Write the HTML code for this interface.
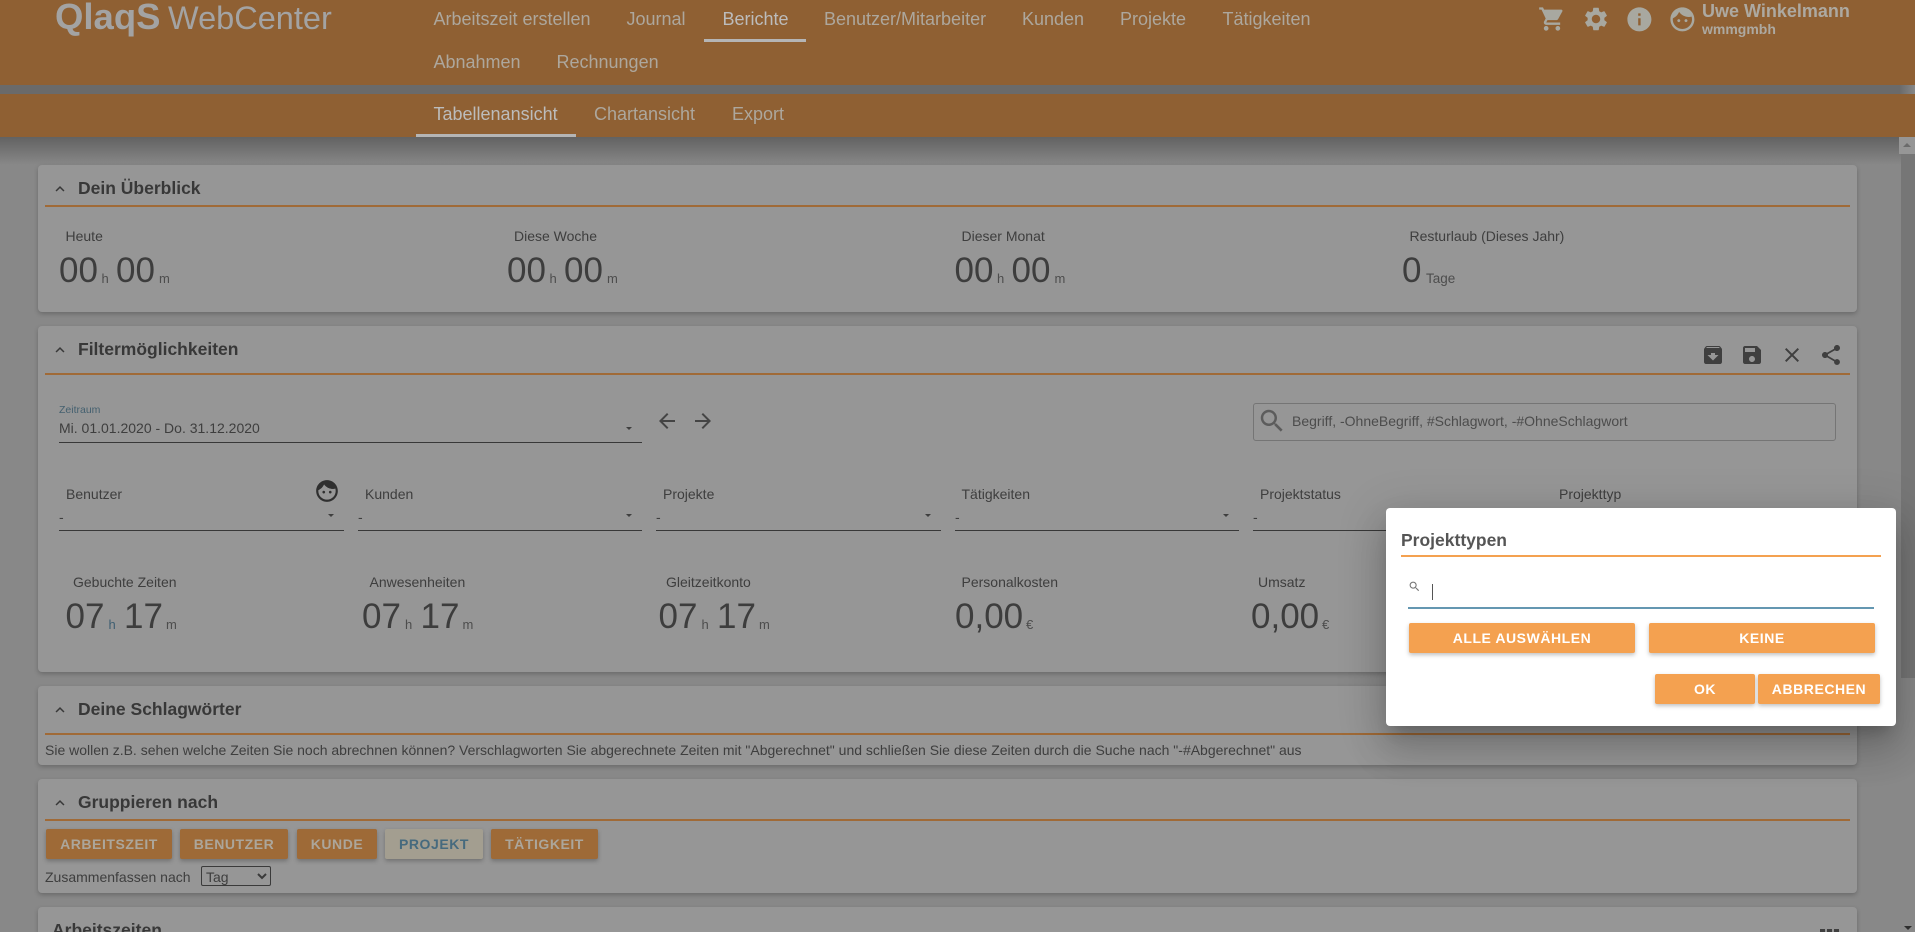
<!DOCTYPE html>
<html lang="de"><head><meta charset="utf-8"><title>QlaqS WebCenter</title>
<style>
*{box-sizing:border-box}
html,body{margin:0;padding:0;width:1915px;height:932px;overflow:hidden;background:#888;font-family:"Liberation Sans",Arial,sans-serif}
#w{position:relative;width:1915px;height:932px;overflow:hidden}
.a{position:absolute}
.t{position:absolute;white-space:nowrap;line-height:20px;font-size:14px;color:#3e3e3e}
.nav{font-size:18px;color:#ada79d}
.card{position:absolute;left:38px;width:1819px;background:#969696;border-radius:4px;box-shadow:0 2px 5px rgba(0,0,0,.22)}
.div{position:absolute;left:45px;width:1805px;height:2px;background:#a06a37}
.h{font-size:17.5px;font-weight:bold;color:#383838;left:78px}
.big{position:absolute;white-space:nowrap;font-size:35px;line-height:40px;color:#3d3d3d}
.sm{font-size:13px;color:#4d4d4d}
.ul{position:absolute;height:1px;background:#383838}
.tri{position:absolute;width:0;height:0;border-left:3px solid transparent;border-right:3px solid transparent;border-top:3px solid #3f3f3f}
.btn{position:absolute;height:30px;line-height:30px;text-align:center;font-size:14px;font-weight:bold;letter-spacing:.55px;border-radius:2px;background:#9e6a37;color:#aca69b;box-shadow:0 2px 4px rgba(0,0,0,.25);white-space:nowrap}
.mb{background:#f4a150;color:#fff;box-shadow:0 2px 4px rgba(0,0,0,.25)}
svg{position:absolute;display:block}
</style></head><body><div id="w">

<!-- page header shadow strip -->
<div class="a" style="left:0;top:85px;width:1915px;height:9px;background:linear-gradient(90deg,#6a6a6a 99.2%,#888 100%)"></div>
<div class="a" style="left:0;top:137px;width:1915px;height:28px;background:linear-gradient(#626262,#888)"></div>

<!-- cards -->
<div class="card" style="top:165px;height:147px"></div>
<div class="card" style="top:326px;height:346px"></div>
<div class="card" style="top:686px;height:79px"></div>
<div class="card" style="top:779px;height:114px"></div>
<div class="card" style="top:907px;height:25px;border-radius:4px 4px 0 0"></div>

<!-- header -->
<div class="a" style="left:0;top:0;width:1915px;height:85px;background:#8f6033"></div>
<div class="a" style="left:0;top:94px;width:1915px;height:43px;background:#8f6033"></div>

<div class="a" style="left:55px;top:-3px;font-size:36.5px;line-height:40px;font-weight:bold;color:#a3a3a3;white-space:nowrap">QlaqS</div>
<div class="a" style="left:168px;top:-2px;font-size:32.5px;line-height:40px;color:#a3a3a3;white-space:nowrap">WebCenter</div>

<div class="t nav" style="left:433.5px;top:9px">Arbeitszeit erstellen</div>
<div class="t nav" style="left:626.5px;top:9px">Journal</div>
<div class="t nav" style="left:722.5px;top:9px;color:#bcbcbc">Berichte</div>
<div class="a" style="left:704px;top:39px;width:102px;height:3px;background:#b5b5b5"></div>
<div class="t nav" style="left:824px;top:9px">Benutzer/Mitarbeiter</div>
<div class="t nav" style="left:1022px;top:9px">Kunden</div>
<div class="t nav" style="left:1120px;top:9px">Projekte</div>
<div class="t nav" style="left:1222.5px;top:9px">Tätigkeiten</div>
<div class="t nav" style="left:433.5px;top:52px">Abnahmen</div>
<div class="t nav" style="left:556.5px;top:52px">Rechnungen</div>

<div class="t nav" style="left:433.5px;top:104px;color:#bcbcbc">Tabellenansicht</div>
<div class="a" style="left:416px;top:134px;width:160px;height:3px;background:#b5b5b5"></div>
<div class="t nav" style="left:594px;top:104px">Chartansicht</div>
<div class="t nav" style="left:732px;top:104px">Export</div>

<svg style="left:1538px;top:5px" width="28" height="28" viewBox="0 0 24 24" fill="#a8a8a0"><path d="M7 18c-1.1 0-1.99.9-1.99 2S5.9 22 7 22s2-.9 2-2-.9-2-2-2zM1 2v2h2l3.6 7.59-1.35 2.45c-.16.28-.25.61-.25.96 0 1.1.9 2 2 2h12v-2H7.42c-.14 0-.25-.11-.25-.25l.03-.12.9-1.63h7.45c.75 0 1.41-.41 1.75-1.03l3.58-6.49c.08-.14.12-.31.12-.48 0-.55-.45-1-1-1H5.21l-.94-2H1zm16 16c-1.1 0-1.99.9-1.99 2s.89 2 1.99 2 2-.9 2-2-.9-2-2-2z"/></svg>
<svg style="left:1582px;top:5px" width="28" height="28" viewBox="0 0 24 24" fill="#a8a8a0"><path d="M19.14 12.94c.04-.3.06-.61.06-.94 0-.32-.02-.64-.07-.94l2.03-1.58c.18-.14.23-.41.12-.61l-1.92-3.32c-.12-.22-.37-.29-.59-.22l-2.39.96c-.5-.38-1.03-.7-1.62-.94l-.36-2.54c-.04-.24-.24-.41-.48-.41h-3.84c-.24 0-.43.17-.47.41l-.36 2.54c-.59.24-1.13.57-1.62.94l-2.39-.96c-.22-.08-.47 0-.59.22L2.74 8.87c-.12.21-.08.47.12.61l2.03 1.58c-.05.3-.09.63-.09.94s.02.64.07.94l-2.03 1.58c-.18.14-.23.41-.12.61l1.92 3.32c.12.22.37.29.59.22l2.39-.96c.5.38 1.03.7 1.62.94l.36 2.54c.05.24.24.41.48.41h3.84c.24 0 .44-.17.47-.41l.36-2.54c.59-.24 1.13-.56 1.62-.94l2.39.96c.22.08.47 0 .59-.22l1.92-3.32c.12-.22.07-.47-.12-.61l-2.01-1.58zM12 15.6c-1.98 0-3.6-1.62-3.6-3.6s1.62-3.6 3.6-3.6 3.6 1.62 3.6 3.6-1.62 3.6-3.6 3.6z"/></svg>
<svg style="left:1625px;top:5px" width="28.8" height="28.8" viewBox="0 0 24 24" fill="#a8a8a0"><path d="M12 2C6.48 2 2 6.48 2 12s4.48 10 10 10 10-4.48 10-10S17.52 2 12 2zm1 15h-2v-6h2v6zm0-8h-2V7h2v2z"/></svg>
<svg style="left:1668px;top:5px" width="28.8" height="28.8" viewBox="0 0 24 24" fill="#a8a8a0"><path d="M9 11.75c-.69 0-1.25.56-1.25 1.25s.56 1.25 1.25 1.25 1.25-.56 1.25-1.25-.56-1.25-1.25-1.25zm6 0c-.69 0-1.25.56-1.25 1.25s.56 1.25 1.25 1.25 1.25-.56 1.25-1.25-.56-1.25-1.25-1.25zM12 2C6.48 2 2 6.48 2 12s4.48 10 10 10 10-4.48 10-10S17.52 2 12 2zm0 18c-4.41 0-8-3.59-8-8 0-.29.02-.58.05-.86 2.36-1.05 4.23-2.98 5.21-5.37C11.07 8.33 14.05 10 17.42 10c.78 0 1.53-.09 2.25-.26.21.71.33 1.47.33 2.26 0 4.41-3.59 8-8 8z"/></svg>
<div class="t" style="left:1702px;top:1px;font-size:18px;font-weight:bold;color:#ada9a1">Uwe Winkelmann</div>
<div class="t" style="left:1702px;top:19px;font-size:14px;font-weight:bold;color:#ada9a1">wmmgmbh</div>

<!-- Scrollbar -->
<div class="a" style="left:1899px;top:137px;width:16px;height:17px;background:#969696"></div>
<div class="a" style="left:1903px;top:143px;width:0;height:0;border-left:4px solid transparent;border-right:4px solid transparent;border-bottom:4px solid #6b6b6b"></div>
<div class="a" style="left:1901px;top:154px;width:14px;height:524px;background:#767676"></div>
<div class="a" style="left:1904px;top:926px;width:0;height:0;border-left:4px solid transparent;border-right:4px solid transparent;border-top:4px solid #2e2e2e"></div>

<!-- Card 1 -->
<svg style="left:51px;top:180px" width="18" height="18" viewBox="0 0 24 24" fill="#383838"><path d="M12 8l-6 6 1.41 1.41L12 10.83l4.59 4.58L18 14z"/></svg>
<div class="t h" style="top:178px">Dein Überblick</div>
<div class="div" style="top:205px"></div>

<div class="t" style="left:65.5px;top:226px">Heute</div>
<div class="big" style="left:59px;top:251px">00</div><div class="t sm" style="left:101.5px;top:269px">h</div>
<div class="big" style="left:116px;top:251px">00</div><div class="t sm" style="left:159px;top:269px">m</div>

<div class="t" style="left:514px;top:226px">Diese Woche</div>
<div class="big" style="left:507px;top:251px">00</div><div class="t sm" style="left:549.5px;top:269px">h</div>
<div class="big" style="left:564px;top:251px">00</div><div class="t sm" style="left:607px;top:269px">m</div>

<div class="t" style="left:961.5px;top:226px">Dieser Monat</div>
<div class="big" style="left:954.5px;top:251px">00</div><div class="t sm" style="left:997px;top:269px">h</div>
<div class="big" style="left:1011.5px;top:251px">00</div><div class="t sm" style="left:1054.5px;top:269px">m</div>

<div class="t" style="left:1409.5px;top:226px">Resturlaub (Dieses Jahr)</div>
<div class="big" style="left:1402px;top:251px">0</div><div class="t sm" style="left:1426px;top:269px;font-size:13.5px">Tage</div>

<!-- Card 2 -->
<svg style="left:51px;top:341px" width="18" height="18" viewBox="0 0 24 24" fill="#383838"><path d="M12 8l-6 6 1.41 1.41L12 10.83l4.59 4.58L18 14z"/></svg>
<div class="t h" style="top:339px">Filtermöglichkeiten</div>
<div class="div" style="top:373px"></div>

<svg style="left:1701px;top:343px" width="24" height="24" viewBox="0 0 24 24" fill="#3f3f3f"><path d="M20.54 5.23l-1.39-1.68C18.88 3.21 18.47 3 18 3H6c-.47 0-.88.21-1.16.55L3.46 5.23C3.17 5.57 3 6.02 3 6.5V19c0 1.1.9 2 2 2h14c1.1 0 2-.9 2-2V6.5c0-.48-.17-.93-.46-1.27zM12 17.5L6.5 12H10v-2h4v2h3.5L12 17.5zM5.12 5l.81-1h12l.94 1H5.12z"/></svg>
<svg style="left:1740px;top:343px" width="24" height="24" viewBox="0 0 24 24" fill="#3f3f3f"><path d="M17 3H5c-1.11 0-2 .9-2 2v14c0 1.1.89 2 2 2h14c1.1 0 2-.9 2-2V7l-4-4zm-5 16c-1.66 0-3-1.34-3-3s1.34-3 3-3 3 1.34 3 3-1.34 3-3 3zm3-10H5V5h10v4z"/></svg>
<svg style="left:1779.5px;top:343px" width="24" height="24" viewBox="0 0 24 24" fill="#3f3f3f"><path d="M19 6.41L17.59 5 12 10.59 6.41 5 5 6.41 10.59 12 5 17.59 6.41 19 12 13.41 17.59 19 19 17.59 13.41 12z"/></svg>
<svg style="left:1819px;top:343px" width="24" height="24" viewBox="0 0 24 24" fill="#3f3f3f"><path d="M18 16.08c-.76 0-1.44.3-1.96.77L8.91 12.7c.05-.23.09-.46.09-.7s-.04-.47-.09-.7l7.05-4.11c.54.5 1.25.81 2.04.81 1.66 0 3-1.34 3-3s-1.34-3-3-3-3 1.34-3 3c0 .24.04.47.09.7L8.04 9.81C7.5 9.31 6.79 9 6 9c-1.66 0-3 1.34-3 3s1.34 3 3 3c.79 0 1.5-.31 2.04-.81l7.12 4.16c-.05.21-.08.43-.08.65 0 1.61 1.31 2.92 2.92 2.92 1.61 0 2.92-1.31 2.92-2.92s-1.31-2.92-2.92-2.92z"/></svg>

<div class="t" style="left:59px;top:400px;font-size:10.5px;color:#44606f">Zeitraum</div>
<div class="t" style="left:59px;top:418px">Mi. 01.01.2020 - Do. 31.12.2020</div>
<div class="ul" style="left:59px;top:442px;width:583px"></div>
<div class="tri" style="left:626px;top:427px"></div>
<svg style="left:655px;top:409px" width="24" height="24" viewBox="0 0 24 24" fill="#444"><path d="M20 11H7.83l5.59-5.59L12 4l-8 8 8 8 1.41-1.41L7.83 13H20v-2z"/></svg>
<svg style="left:691px;top:409px" width="24" height="24" viewBox="0 0 24 24" fill="#444"><path d="M12 4l-1.41 1.41L16.17 11H4v2h12.17l-5.58 5.59L12 20l8-8z"/></svg>

<div class="a" style="left:1253px;top:403px;width:583px;height:38px;border:1px solid #757575;border-radius:3px"></div>
<svg style="left:1257px;top:406px" width="30" height="30" viewBox="0 0 24 24" fill="#5c5c5c"><path d="M15.5 14h-.79l-.28-.27C15.41 12.59 16 11.11 16 9.5 16 5.91 13.09 3 9.5 3S3 5.91 3 9.5 5.91 16 9.5 16c1.61 0 3.09-.59 4.23-1.57l.27.28v.79l5 4.99L20.49 19l-4.99-5zm-6 0C7.01 14 5 11.99 5 9.5S7.01 5 9.5 5 14 7.01 14 9.5 11.99 14 9.5 14z"/></svg>
<div class="t" style="left:1292px;top:411px;color:#4c4c4c">Begriff, -OhneBegriff, #Schlagwort, -#OhneSchlagwort</div>

<div class="t" style="left:66px;top:484px">Benutzer</div>
<div class="t" style="left:365px;top:484px">Kunden</div>
<div class="t" style="left:663px;top:484px">Projekte</div>
<div class="t" style="left:961.5px;top:484px">Tätigkeiten</div>
<div class="t" style="left:1260px;top:484px">Projektstatus</div>
<div class="t" style="left:1559px;top:484px">Projekttyp</div>

<svg style="left:314px;top:478px" width="26" height="26" viewBox="0 0 24 24" fill="#2f2f2f"><path d="M4.05 11.14C6.41 10.09 8.28 8.16 9.26 5.77 11.07 8.33 14.05 10 17.42 10c.78 0 1.53-.09 2.25-.26C18.8 6 15.5 3 12 3 7.5 3 4.3 7 4.05 11.14z"/><path d="M9 11.75c-.69 0-1.25.56-1.25 1.25s.56 1.25 1.25 1.25 1.25-.56 1.25-1.25-.56-1.25-1.25-1.25zm6 0c-.69 0-1.25.56-1.25 1.25s.56 1.25 1.25 1.25 1.25-.56 1.25-1.25-.56-1.25-1.25-1.25zM12 2C6.48 2 2 6.48 2 12s4.48 10 10 10 10-4.48 10-10S17.52 2 12 2zm0 18c-4.41 0-8-3.59-8-8 0-.29.02-.58.05-.86 2.36-1.05 4.23-2.98 5.21-5.37C11.07 8.33 14.05 10 17.42 10c.78 0 1.53-.09 2.25-.26.21.71.33 1.47.33 2.26 0 4.41-3.59 8-8 8z"/></svg>

<div class="t" style="left:59px;top:507px">-</div>
<div class="t" style="left:358px;top:507px">-</div>
<div class="t" style="left:656px;top:507px">-</div>
<div class="t" style="left:955px;top:507px">-</div>
<div class="t" style="left:1253px;top:507px">-</div>
<div class="tri" style="left:328px;top:514px"></div>
<div class="tri" style="left:626px;top:514px"></div>
<div class="tri" style="left:925px;top:514px"></div>
<div class="tri" style="left:1223px;top:514px"></div>
<div class="ul" style="left:59px;top:530px;width:285px"></div>
<div class="ul" style="left:358px;top:530px;width:284px"></div>
<div class="ul" style="left:656px;top:530px;width:285px"></div>
<div class="ul" style="left:955px;top:530px;width:284px"></div>
<div class="ul" style="left:1253px;top:530px;width:150px"></div>

<div class="t" style="left:73px;top:572px">Gebuchte Zeiten</div>
<div class="big" style="left:65.5px;top:597px">07</div><div class="t sm" style="left:108.5px;top:615px;color:#3f5f72">h</div>
<div class="big" style="left:124px;top:597px">17</div><div class="t sm" style="left:166px;top:615px">m</div>

<div class="t" style="left:369.5px;top:572px">Anwesenheiten</div>
<div class="big" style="left:362px;top:597px">07</div><div class="t sm" style="left:405px;top:615px">h</div>
<div class="big" style="left:420.5px;top:597px">17</div><div class="t sm" style="left:462.5px;top:615px">m</div>

<div class="t" style="left:666px;top:572px">Gleitzeitkonto</div>
<div class="big" style="left:658.5px;top:597px">07</div><div class="t sm" style="left:701.5px;top:615px">h</div>
<div class="big" style="left:717px;top:597px">17</div><div class="t sm" style="left:759px;top:615px">m</div>

<div class="t" style="left:961.5px;top:572px">Personalkosten</div>
<div class="big" style="left:955px;top:597px">0,00</div><div class="t sm" style="left:1026px;top:615px">€</div>

<div class="t" style="left:1258px;top:572px">Umsatz</div>
<div class="big" style="left:1251px;top:597px">0,00</div><div class="t sm" style="left:1322px;top:615px">€</div>

<!-- Card 3 -->
<svg style="left:51px;top:701px" width="18" height="18" viewBox="0 0 24 24" fill="#383838"><path d="M12 8l-6 6 1.41 1.41L12 10.83l4.59 4.58L18 14z"/></svg>
<div class="t h" style="top:699px">Deine Schlagwörter</div>
<div class="div" style="top:733px"></div>
<div class="t" style="left:45px;top:740px">Sie wollen z.B. sehen welche Zeiten Sie noch abrechnen können? Verschlagworten Sie abgerechnete Zeiten mit "Abgerechnet" und schließen Sie diese Zeiten durch die Suche nach "-#Abgerechnet" aus</div>

<!-- Card 4 -->
<svg style="left:51px;top:794px" width="18" height="18" viewBox="0 0 24 24" fill="#383838"><path d="M12 8l-6 6 1.41 1.41L12 10.83l4.59 4.58L18 14z"/></svg>
<div class="t h" style="top:792px">Gruppieren nach</div>
<div class="div" style="top:819px"></div>
<div class="btn" style="left:46px;top:829px;width:126px">ARBEITSZEIT</div>
<div class="btn" style="left:180px;top:829px;width:108px">BENUTZER</div>
<div class="btn" style="left:297px;top:829px;width:80px">KUNDE</div>
<div class="btn" style="left:385px;top:829px;width:98px;background:#a39e90;color:#466a7e">PROJEKT</div>
<div class="btn" style="left:491px;top:829px;width:107px">TÄTIGKEIT</div>
<div class="t" style="left:45px;top:867px">Zusammenfassen nach</div>
<div class="a" style="left:201px;top:866px;width:70px;height:20px;border:1px solid #3a3a3a;border-radius:2px"></div>
<div class="t" style="left:206px;top:867px">Tag</div>
<svg style="left:257px;top:873px" width="10" height="7" viewBox="0 0 10 7"><path d="M1 1l4 4 4-4" fill="none" stroke="#3a3a3a" stroke-width="2"/></svg>

<!-- Card 5 -->
<div class="t h" style="left:52px;top:920px">Arbeitszeiten</div>
<div class="a" style="left:1820px;top:929px;width:5px;height:3px;background:#3f3f3f"></div>
<div class="a" style="left:1827px;top:929px;width:5px;height:3px;background:#3f3f3f"></div>
<div class="a" style="left:1834px;top:929px;width:5px;height:3px;background:#3f3f3f"></div>

<!-- Modal -->
<div class="a" style="left:1386px;top:508px;width:510px;height:218px;background:#fff;border-radius:4px;box-shadow:0 11px 15px -7px rgba(0,0,0,.2),0 24px 38px 3px rgba(0,0,0,.14),0 9px 46px 8px rgba(0,0,0,.12)"></div>
<div class="t" style="left:1401px;top:530px;font-size:17.5px;font-weight:bold;color:#555">Projekttypen</div>
<div class="a" style="left:1401px;top:555px;width:480px;height:2px;background:#f4a150"></div>
<svg style="left:1408px;top:580px" width="13" height="13" viewBox="0 0 24 24" fill="#777"><path d="M15.5 14h-.79l-.28-.27C15.41 12.59 16 11.11 16 9.5 16 5.91 13.09 3 9.5 3S3 5.91 3 9.5 5.91 16 9.5 16c1.61 0 3.09-.59 4.23-1.57l.27.28v.79l5 4.99L20.49 19l-4.99-5zm-6 0C7.01 14 5 11.99 5 9.5S7.01 5 9.5 5 14 7.01 14 9.5 11.99 14 9.5 14z"/></svg>
<div class="a" style="left:1432px;top:584px;width:1px;height:16px;background:#555"></div>
<div class="a" style="left:1408px;top:607px;width:466px;height:2px;background:#6497b1"></div>
<div class="btn mb" style="left:1409px;top:623px;width:226px">ALLE AUSWÄHLEN</div>
<div class="btn mb" style="left:1649px;top:623px;width:226px">KEINE</div>
<div class="btn mb" style="left:1655px;top:674px;width:100px">OK</div>
<div class="btn mb" style="left:1758px;top:674px;width:122px">ABBRECHEN</div>
</div></body></html>
